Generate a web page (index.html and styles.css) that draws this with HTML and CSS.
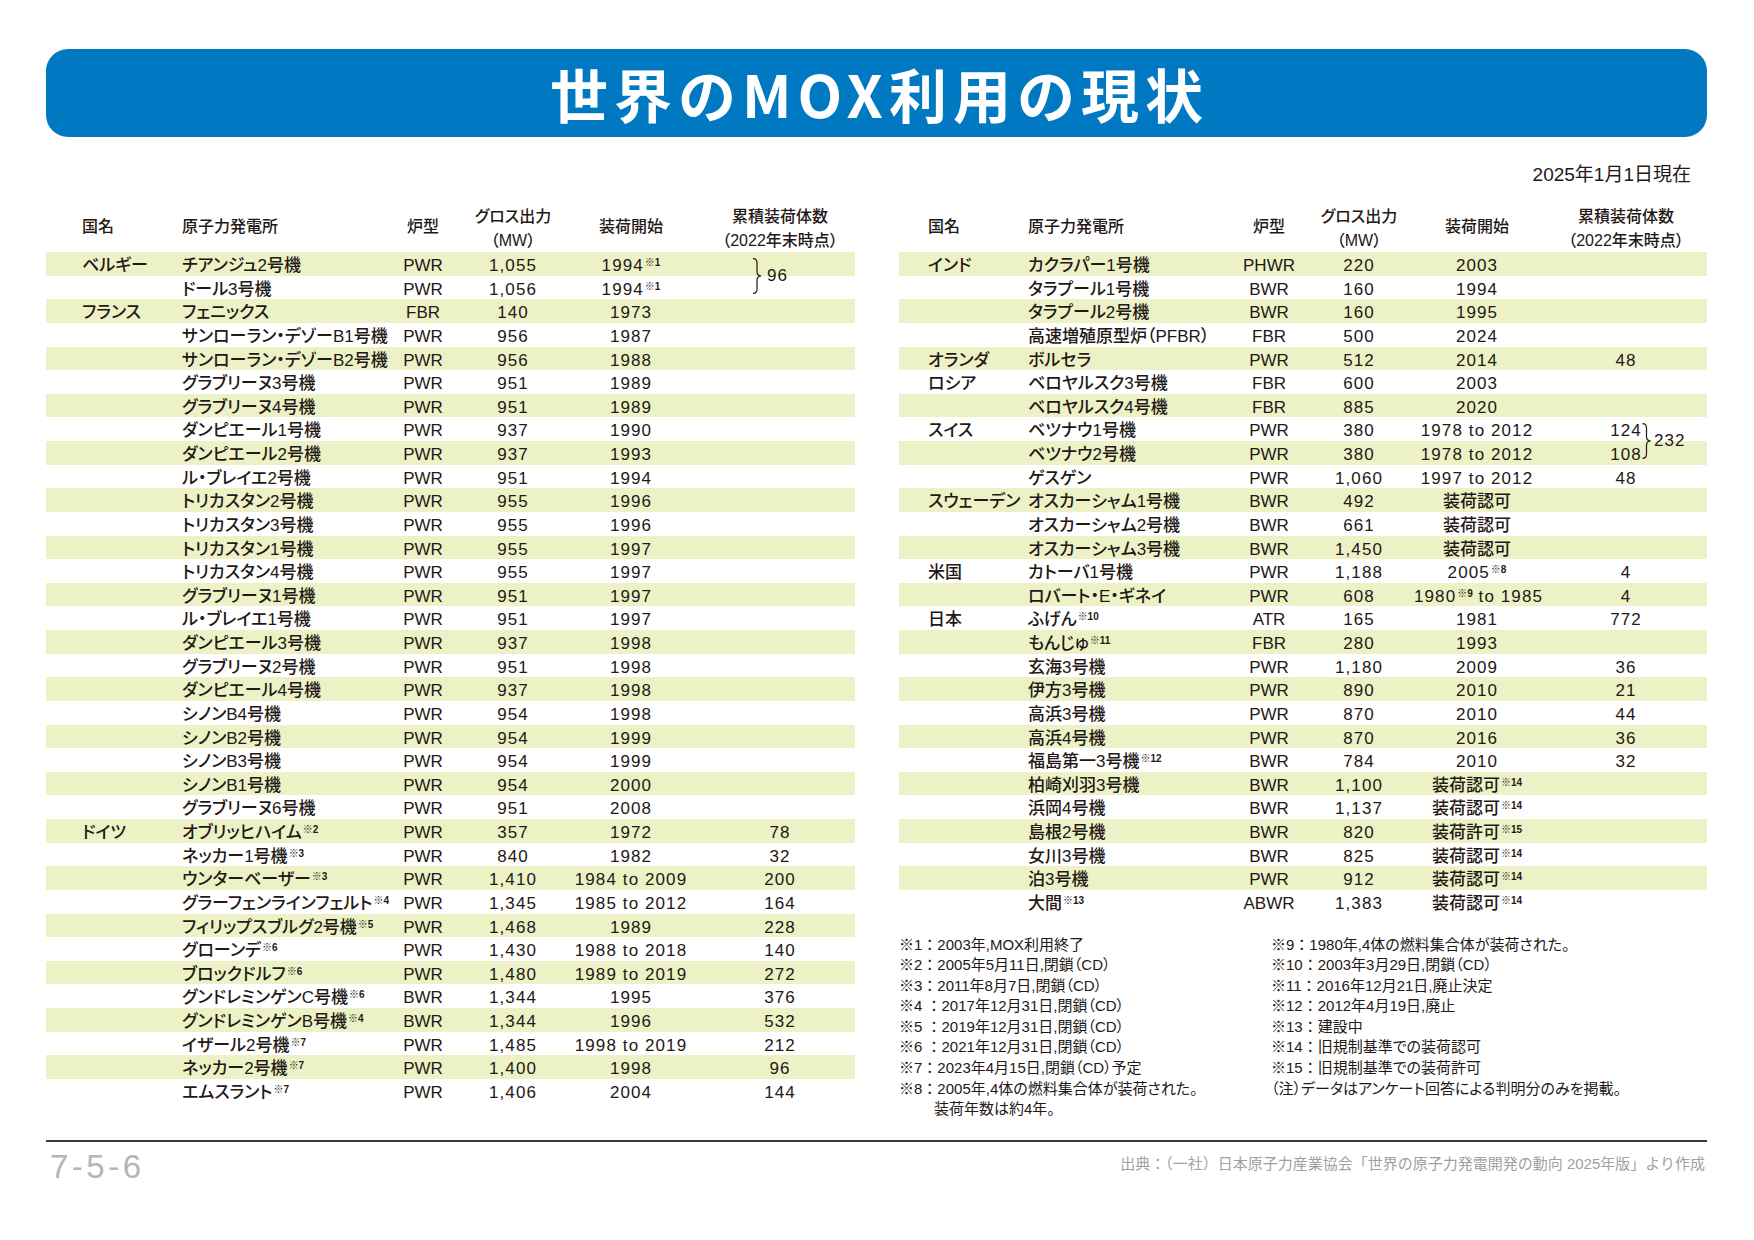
FILE: index.html
```html
<!DOCTYPE html>
<html lang="ja">
<head>
<meta charset="utf-8">
<title>世界のMOX利用の現状</title>
<link rel="stylesheet" href="styles.css">
</head>
<body>
<div class="page">
  <header class="banner"><h1>世界のMOX利用の現状</h1></header>
  <p class="date">2025年1月1日現在</p>

  <div class="tables">
    <section class="tbl tbl-l">
      <div class="row head">
        <div class="c c1">国名</div><div class="c c2">原子力発電所</div><div class="c c3">炉型</div>
        <div class="c c4 two">グロス出力<br>（MW）</div><div class="c c5">装荷開始</div>
        <div class="c c6 two">累積装荷体数<br>（2022年末時点）</div>
      </div>
      <div class="rows">
        <div class="row"><div class="c c1">ベルギー</div><div class="c c2">チアンジュ2号機</div><div class="c c3">PWR</div><div class="c c4 n">1,055</div><div class="c c5 n">1994<span class="s">※1</span></div><div class="c c6 n"><span class="grp g-be"><svg class="brace" viewBox="0 0 10 36" width="10" height="36"><path d="M1 0.6 Q5 0.6 5 5 L5 13.6 Q5 18 9.2 18 Q5 18 5 22.4 L5 31 Q5 35.4 1 35.4"/></svg><span>96</span></span></div></div>
        <div class="row"><div class="c c1"></div><div class="c c2">ドール3号機</div><div class="c c3">PWR</div><div class="c c4 n">1,056</div><div class="c c5 n">1994<span class="s">※1</span></div><div class="c c6 n"></div></div>
        <div class="row"><div class="c c1">フランス</div><div class="c c2">フェニックス</div><div class="c c3">FBR</div><div class="c c4 n">140</div><div class="c c5 n">1973</div><div class="c c6 n"></div></div>
        <div class="row"><div class="c c1"></div><div class="c c2">サンローラン・デゾーB1号機</div><div class="c c3">PWR</div><div class="c c4 n">956</div><div class="c c5 n">1987</div><div class="c c6 n"></div></div>
        <div class="row"><div class="c c1"></div><div class="c c2">サンローラン・デゾーB2号機</div><div class="c c3">PWR</div><div class="c c4 n">956</div><div class="c c5 n">1988</div><div class="c c6 n"></div></div>
        <div class="row"><div class="c c1"></div><div class="c c2">グラブリーヌ3号機</div><div class="c c3">PWR</div><div class="c c4 n">951</div><div class="c c5 n">1989</div><div class="c c6 n"></div></div>
        <div class="row"><div class="c c1"></div><div class="c c2">グラブリーヌ4号機</div><div class="c c3">PWR</div><div class="c c4 n">951</div><div class="c c5 n">1989</div><div class="c c6 n"></div></div>
        <div class="row"><div class="c c1"></div><div class="c c2">ダンピエール1号機</div><div class="c c3">PWR</div><div class="c c4 n">937</div><div class="c c5 n">1990</div><div class="c c6 n"></div></div>
        <div class="row"><div class="c c1"></div><div class="c c2">ダンピエール2号機</div><div class="c c3">PWR</div><div class="c c4 n">937</div><div class="c c5 n">1993</div><div class="c c6 n"></div></div>
        <div class="row"><div class="c c1"></div><div class="c c2">ル・ブレイエ2号機</div><div class="c c3">PWR</div><div class="c c4 n">951</div><div class="c c5 n">1994</div><div class="c c6 n"></div></div>
        <div class="row"><div class="c c1"></div><div class="c c2">トリカスタン2号機</div><div class="c c3">PWR</div><div class="c c4 n">955</div><div class="c c5 n">1996</div><div class="c c6 n"></div></div>
        <div class="row"><div class="c c1"></div><div class="c c2">トリカスタン3号機</div><div class="c c3">PWR</div><div class="c c4 n">955</div><div class="c c5 n">1996</div><div class="c c6 n"></div></div>
        <div class="row"><div class="c c1"></div><div class="c c2">トリカスタン1号機</div><div class="c c3">PWR</div><div class="c c4 n">955</div><div class="c c5 n">1997</div><div class="c c6 n"></div></div>
        <div class="row"><div class="c c1"></div><div class="c c2">トリカスタン4号機</div><div class="c c3">PWR</div><div class="c c4 n">955</div><div class="c c5 n">1997</div><div class="c c6 n"></div></div>
        <div class="row"><div class="c c1"></div><div class="c c2">グラブリーヌ1号機</div><div class="c c3">PWR</div><div class="c c4 n">951</div><div class="c c5 n">1997</div><div class="c c6 n"></div></div>
        <div class="row"><div class="c c1"></div><div class="c c2">ル・ブレイエ1号機</div><div class="c c3">PWR</div><div class="c c4 n">951</div><div class="c c5 n">1997</div><div class="c c6 n"></div></div>
        <div class="row"><div class="c c1"></div><div class="c c2">ダンピエール3号機</div><div class="c c3">PWR</div><div class="c c4 n">937</div><div class="c c5 n">1998</div><div class="c c6 n"></div></div>
        <div class="row"><div class="c c1"></div><div class="c c2">グラブリーヌ2号機</div><div class="c c3">PWR</div><div class="c c4 n">951</div><div class="c c5 n">1998</div><div class="c c6 n"></div></div>
        <div class="row"><div class="c c1"></div><div class="c c2">ダンピエール4号機</div><div class="c c3">PWR</div><div class="c c4 n">937</div><div class="c c5 n">1998</div><div class="c c6 n"></div></div>
        <div class="row"><div class="c c1"></div><div class="c c2">シノンB4号機</div><div class="c c3">PWR</div><div class="c c4 n">954</div><div class="c c5 n">1998</div><div class="c c6 n"></div></div>
        <div class="row"><div class="c c1"></div><div class="c c2">シノンB2号機</div><div class="c c3">PWR</div><div class="c c4 n">954</div><div class="c c5 n">1999</div><div class="c c6 n"></div></div>
        <div class="row"><div class="c c1"></div><div class="c c2">シノンB3号機</div><div class="c c3">PWR</div><div class="c c4 n">954</div><div class="c c5 n">1999</div><div class="c c6 n"></div></div>
        <div class="row"><div class="c c1"></div><div class="c c2">シノンB1号機</div><div class="c c3">PWR</div><div class="c c4 n">954</div><div class="c c5 n">2000</div><div class="c c6 n"></div></div>
        <div class="row"><div class="c c1"></div><div class="c c2">グラブリーヌ6号機</div><div class="c c3">PWR</div><div class="c c4 n">951</div><div class="c c5 n">2008</div><div class="c c6 n"></div></div>
        <div class="row"><div class="c c1">ドイツ</div><div class="c c2">オブリッヒハイム<span class="s">※2</span></div><div class="c c3">PWR</div><div class="c c4 n">357</div><div class="c c5 n">1972</div><div class="c c6 n">78</div></div>
        <div class="row"><div class="c c1"></div><div class="c c2">ネッカー1号機<span class="s">※3</span></div><div class="c c3">PWR</div><div class="c c4 n">840</div><div class="c c5 n">1982</div><div class="c c6 n">32</div></div>
        <div class="row"><div class="c c1"></div><div class="c c2">ウンターベーザー<span class="s">※3</span></div><div class="c c3">PWR</div><div class="c c4 n">1,410</div><div class="c c5 n">1984 to 2009</div><div class="c c6 n">200</div></div>
        <div class="row"><div class="c c1"></div><div class="c c2">グラーフェンラインフェルト<span class="s">※4</span></div><div class="c c3">PWR</div><div class="c c4 n">1,345</div><div class="c c5 n">1985 to 2012</div><div class="c c6 n">164</div></div>
        <div class="row"><div class="c c1"></div><div class="c c2">フィリップスブルグ2号機<span class="s">※5</span></div><div class="c c3">PWR</div><div class="c c4 n">1,468</div><div class="c c5 n">1989</div><div class="c c6 n">228</div></div>
        <div class="row"><div class="c c1"></div><div class="c c2">グローンデ<span class="s">※6</span></div><div class="c c3">PWR</div><div class="c c4 n">1,430</div><div class="c c5 n">1988 to 2018</div><div class="c c6 n">140</div></div>
        <div class="row"><div class="c c1"></div><div class="c c2">ブロックドルフ<span class="s">※6</span></div><div class="c c3">PWR</div><div class="c c4 n">1,480</div><div class="c c5 n">1989 to 2019</div><div class="c c6 n">272</div></div>
        <div class="row"><div class="c c1"></div><div class="c c2">グンドレミンゲンC号機<span class="s">※6</span></div><div class="c c3">BWR</div><div class="c c4 n">1,344</div><div class="c c5 n">1995</div><div class="c c6 n">376</div></div>
        <div class="row"><div class="c c1"></div><div class="c c2">グンドレミンゲンB号機<span class="s">※4</span></div><div class="c c3">BWR</div><div class="c c4 n">1,344</div><div class="c c5 n">1996</div><div class="c c6 n">532</div></div>
        <div class="row"><div class="c c1"></div><div class="c c2">イザール2号機<span class="s">※7</span></div><div class="c c3">PWR</div><div class="c c4 n">1,485</div><div class="c c5 n">1998 to 2019</div><div class="c c6 n">212</div></div>
        <div class="row"><div class="c c1"></div><div class="c c2">ネッカー2号機<span class="s">※7</span></div><div class="c c3">PWR</div><div class="c c4 n">1,400</div><div class="c c5 n">1998</div><div class="c c6 n">96</div></div>
        <div class="row"><div class="c c1"></div><div class="c c2">エムスラント<span class="s">※7</span></div><div class="c c3">PWR</div><div class="c c4 n">1,406</div><div class="c c5 n">2004</div><div class="c c6 n">144</div></div>
      </div>
    </section>

    <div class="col-r">
      <section class="tbl tbl-r">
        <div class="row head">
          <div class="c c1">国名</div><div class="c c2">原子力発電所</div><div class="c c3">炉型</div>
          <div class="c c4 two">グロス出力<br>（MW）</div><div class="c c5">装荷開始</div>
          <div class="c c6 two">累積装荷体数<br>（2022年末時点）</div>
        </div>
        <div class="rows">
          <div class="row"><div class="c c1">インド</div><div class="c c2">カクラパー1号機</div><div class="c c3">PHWR</div><div class="c c4 n">220</div><div class="c c5 n">2003</div><div class="c c6 n"></div></div>
          <div class="row"><div class="c c1"></div><div class="c c2">タラプール1号機</div><div class="c c3">BWR</div><div class="c c4 n">160</div><div class="c c5 n">1994</div><div class="c c6 n"></div></div>
          <div class="row"><div class="c c1"></div><div class="c c2">タラプール2号機</div><div class="c c3">BWR</div><div class="c c4 n">160</div><div class="c c5 n">1995</div><div class="c c6 n"></div></div>
          <div class="row"><div class="c c1"></div><div class="c c2">高速増殖原型炉（PFBR）</div><div class="c c3">FBR</div><div class="c c4 n">500</div><div class="c c5 n">2024</div><div class="c c6 n"></div></div>
          <div class="row"><div class="c c1">オランダ</div><div class="c c2">ボルセラ</div><div class="c c3">PWR</div><div class="c c4 n">512</div><div class="c c5 n">2014</div><div class="c c6 n">48</div></div>
          <div class="row"><div class="c c1">ロシア</div><div class="c c2">ベロヤルスク3号機</div><div class="c c3">FBR</div><div class="c c4 n">600</div><div class="c c5 n">2003</div><div class="c c6 n"></div></div>
          <div class="row"><div class="c c1"></div><div class="c c2">ベロヤルスク4号機</div><div class="c c3">FBR</div><div class="c c4 n">885</div><div class="c c5 n">2020</div><div class="c c6 n"></div></div>
          <div class="row"><div class="c c1">スイス</div><div class="c c2">ベツナウ1号機</div><div class="c c3">PWR</div><div class="c c4 n">380</div><div class="c c5 n">1978 to 2012</div><div class="c c6 n">124<span class="grp g-ch"><svg class="brace" viewBox="0 0 10 36" width="11" height="36"><path d="M1 0.6 Q5 0.6 5 5 L5 13.6 Q5 18 9.2 18 Q5 18 5 22.4 L5 31 Q5 35.4 1 35.4"/></svg><span>232</span></span></div></div>
          <div class="row"><div class="c c1"></div><div class="c c2">ベツナウ2号機</div><div class="c c3">PWR</div><div class="c c4 n">380</div><div class="c c5 n">1978 to 2012</div><div class="c c6 n">108</div></div>
          <div class="row"><div class="c c1"></div><div class="c c2">ゲスゲン</div><div class="c c3">PWR</div><div class="c c4 n">1,060</div><div class="c c5 n">1997 to 2012</div><div class="c c6 n">48</div></div>
          <div class="row"><div class="c c1">スウェーデン</div><div class="c c2">オスカーシャム1号機</div><div class="c c3">BWR</div><div class="c c4 n">492</div><div class="c c5">装荷認可</div><div class="c c6 n"></div></div>
          <div class="row"><div class="c c1"></div><div class="c c2">オスカーシャム2号機</div><div class="c c3">BWR</div><div class="c c4 n">661</div><div class="c c5">装荷認可</div><div class="c c6 n"></div></div>
          <div class="row"><div class="c c1"></div><div class="c c2">オスカーシャム3号機</div><div class="c c3">BWR</div><div class="c c4 n">1,450</div><div class="c c5">装荷認可</div><div class="c c6 n"></div></div>
          <div class="row"><div class="c c1">米国</div><div class="c c2">カトーバ1号機</div><div class="c c3">PWR</div><div class="c c4 n">1,188</div><div class="c c5 n">2005<span class="s">※8</span></div><div class="c c6 n">4</div></div>
          <div class="row"><div class="c c1"></div><div class="c c2">ロバート・E・ギネイ</div><div class="c c3">PWR</div><div class="c c4 n">608</div><div class="c c5 n">1980<span class="s">※9</span> to 1985</div><div class="c c6 n">4</div></div>
          <div class="row"><div class="c c1">日本</div><div class="c c2">ふげん<span class="s">※10</span></div><div class="c c3">ATR</div><div class="c c4 n">165</div><div class="c c5 n">1981</div><div class="c c6 n">772</div></div>
          <div class="row"><div class="c c1"></div><div class="c c2">もんじゅ<span class="s">※11</span></div><div class="c c3">FBR</div><div class="c c4 n">280</div><div class="c c5 n">1993</div><div class="c c6 n"></div></div>
          <div class="row"><div class="c c1"></div><div class="c c2">玄海3号機</div><div class="c c3">PWR</div><div class="c c4 n">1,180</div><div class="c c5 n">2009</div><div class="c c6 n">36</div></div>
          <div class="row"><div class="c c1"></div><div class="c c2">伊方3号機</div><div class="c c3">PWR</div><div class="c c4 n">890</div><div class="c c5 n">2010</div><div class="c c6 n">21</div></div>
          <div class="row"><div class="c c1"></div><div class="c c2">高浜3号機</div><div class="c c3">PWR</div><div class="c c4 n">870</div><div class="c c5 n">2010</div><div class="c c6 n">44</div></div>
          <div class="row"><div class="c c1"></div><div class="c c2">高浜4号機</div><div class="c c3">PWR</div><div class="c c4 n">870</div><div class="c c5 n">2016</div><div class="c c6 n">36</div></div>
          <div class="row"><div class="c c1"></div><div class="c c2">福島第一3号機<span class="s">※12</span></div><div class="c c3">BWR</div><div class="c c4 n">784</div><div class="c c5 n">2010</div><div class="c c6 n">32</div></div>
          <div class="row"><div class="c c1"></div><div class="c c2">柏崎刈羽3号機</div><div class="c c3">BWR</div><div class="c c4 n">1,100</div><div class="c c5">装荷認可<span class="s">※14</span></div><div class="c c6 n"></div></div>
          <div class="row"><div class="c c1"></div><div class="c c2">浜岡4号機</div><div class="c c3">BWR</div><div class="c c4 n">1,137</div><div class="c c5">装荷認可<span class="s">※14</span></div><div class="c c6 n"></div></div>
          <div class="row"><div class="c c1"></div><div class="c c2">島根2号機</div><div class="c c3">BWR</div><div class="c c4 n">820</div><div class="c c5">装荷許可<span class="s">※15</span></div><div class="c c6 n"></div></div>
          <div class="row"><div class="c c1"></div><div class="c c2">女川3号機</div><div class="c c3">BWR</div><div class="c c4 n">825</div><div class="c c5">装荷認可<span class="s">※14</span></div><div class="c c6 n"></div></div>
          <div class="row"><div class="c c1"></div><div class="c c2">泊3号機</div><div class="c c3">PWR</div><div class="c c4 n">912</div><div class="c c5">装荷認可<span class="s">※14</span></div><div class="c c6 n"></div></div>
          <div class="row"><div class="c c1"></div><div class="c c2">大間<span class="s">※13</span></div><div class="c c3">ABWR</div><div class="c c4 n">1,383</div><div class="c c5">装荷認可<span class="s">※14</span></div><div class="c c6 n"></div></div>
        </div>
      </section>

      <div class="notes">
        <ul class="nl">
          <li>※1<span class="k">：</span>2003年,MOX利用終了</li>
          <li>※2<span class="k">：</span>2005年5月11日,閉鎖（CD）</li>
          <li>※3<span class="k">：</span>2011年8月7日,閉鎖（CD）</li>
          <li>※4 <span class="k">：</span>2017年12月31日,閉鎖（CD）</li>
          <li>※5 <span class="k">：</span>2019年12月31日,閉鎖（CD）</li>
          <li>※6 <span class="k">：</span>2021年12月31日,閉鎖（CD）</li>
          <li>※7<span class="k">：</span>2023年4月15日,閉鎖（CD）予定</li>
          <li>※8<span class="k">：</span>2005年,4体の燃料集合体が装荷された。</li>
          <li class="ind">装荷年数は約4年。</li>
        </ul>
        <ul class="nl">
          <li>※9<span class="k">：</span>1980年,4体の燃料集合体が装荷された。</li>
          <li>※10<span class="k">：</span>2003年3月29日,閉鎖（CD）</li>
          <li>※11<span class="k">：</span>2016年12月21日,廃止決定</li>
          <li>※12<span class="k">：</span>2012年4月19日,廃止</li>
          <li>※13<span class="k">：</span>建設中</li>
          <li>※14<span class="k">：</span>旧規制基準での装荷認可</li>
          <li>※15<span class="k">：</span>旧規制基準での装荷許可</li>
          <li>（注）データはアンケート回答による判明分のみを掲載。</li>
        </ul>
      </div>
    </div>
  </div>

  <div class="rule"></div>
  <footer class="foot">
    <span class="pno">7-5-6</span>
    <span class="src">出典：（一社）日本原子力産業協会「世界の原子力発電開発の動向 2025年版」より作成</span>
  </footer>
</div>
</body>
</html>
```

FILE: styles.css
```css
* { box-sizing: border-box; }

body {
  margin: 0;
  background: #ffffff;
  color: #231815;
  font-family: "Liberation Sans", "Noto Sans CJK JP", sans-serif;
  font-feature-settings: "palt";
}

.page {
  width: 1754px;
  padding: 49px 47px 0 46px;
}

.banner {
  height: 88px;
  background: #0079c2;
  border-radius: 22px;
  display: flex;
  align-items: center;
  justify-content: center;
}

.banner h1 {
  margin: 0;
  padding-left: 6px;
  color: #ffffff;
  font-family: "Noto Sans CJK JP", sans-serif;
  font-feature-settings: normal;
  font-weight: 700;
  font-size: 58px;
  line-height: 1;
  letter-spacing: 6px;
}

.date {
  margin: 25px 0 0;
  padding-right: 16px;
  text-align: right;
  font-size: 19px;
  line-height: 26px;
  font-feature-settings: normal;
}

.tables {
  display: flex;
  gap: 44px;
  margin-top: 16px;
  align-items: flex-start;
}

.tbl-l { width: 809px; }
.col-r { width: 808px; }

.row {
  display: grid;
  height: 23.63px;
  padding-top: 4px;
  align-items: center;
  font-size: 17px;
  font-weight: 500;
  line-height: 20px;
  white-space: nowrap;
}

.tbl-l .row { grid-template-columns: 136px 206px 70px 110px 126px 1fr; }
.tbl-r .row { grid-template-columns: 129px 206px 70px 110px 126px 1fr; }

.c { min-height: 20px; }

.tbl-l .c1 { padding-left: 36px; }
.tbl-r .c1 { padding-left: 29px; }
.tbl-l .c6 { padding-left: 11px; }
.tbl-r .c6 { padding-left: 5px; }

.row.head {
  height: 48px;
  padding-top: 0;
  padding-bottom: 2px;
  font-size: 16px;
}

.row.head .two {
  line-height: 24px;
  padding-top: 4px;
}

.rows .row:nth-child(odd) { background: #ecf2c6; }

.c3, .c4, .c5, .c6 { text-align: center; }
.c6 { position: relative; }

.n { letter-spacing: 1.1px; }

.s {
  font-size: 10px;
  font-weight: 700;
  letter-spacing: 0;
  vertical-align: 5px;
  line-height: 0;
  margin-left: 1px;
}

.grp {
  position: absolute;
  top: 2px;
  display: flex;
  align-items: center;
  line-height: 20px;
}

.g-be { left: 58px; gap: 5px; }
.g-ch { left: 101px; gap: 2px; }

.brace path {
  fill: none;
  stroke: #231815;
  stroke-width: 1.2;
}

.notes {
  display: grid;
  grid-template-columns: 372px 1fr;
  margin-top: 21px;
  font-size: 15px;
  line-height: 20.6px;
}

.nl {
  list-style: none;
  margin: 0;
  padding: 0;
  white-space: nowrap;
}

.nl .k { font-feature-settings: normal; }
.nl .ind { padding-left: 35px; }

.rule {
  margin-top: 20px;
  border-top: 2px solid #3e3a39;
}

.foot {
  display: flex;
  justify-content: space-between;
  align-items: center;
  padding: 7px 2px 0 4px;
}

.pno {
  font-size: 33px;
  line-height: 36px;
  color: #b5b5b6;
  letter-spacing: 3.5px;
}

.src {
  margin-bottom: 6px;
  font-size: 15px;
  line-height: 20px;
  color: #9fa0a0;
  font-feature-settings: normal;
}
```
